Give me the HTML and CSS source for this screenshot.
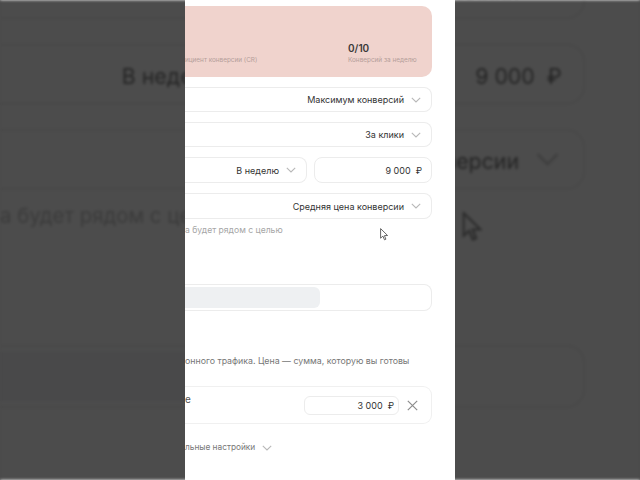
FILE: index.html
```html
<!DOCTYPE html>
<html>
<head>
    <title>Стратегия</title>
    <link rel="stylesheet" href="styles.css">
</head>
<body>
    <div class="stage">
        <div class="backdrop" id="backdrop"></div>

        <div class="panel" id="panel">
            <div class="stats">
                <div class="stat">
                    <div class="stat-value"></div>
                    <div class="stat-label">ициент конверсии (CR)</div>
                </div>
                <div class="stat">
                    <div class="stat-value">0/10</div>
                    <div class="stat-label">Конверсий за неделю</div>
                </div>
            </div>

            <div class="select">
                <span>Максимум конверсий</span>
                <svg class="chevron" width="10" height="6" viewBox="0 0 10 6"><path d="M0.8 0.8L5 5L9.2 0.8"/></svg>
            </div>
            <div class="select">
                <span>За клики</span>
                <svg class="chevron" width="10" height="6" viewBox="0 0 10 6"><path d="M0.8 0.8L5 5L9.2 0.8"/></svg>
            </div>
            <div class="select-pair">
                <div class="select">
                    <span>В неделю</span>
                    <svg class="chevron" width="10" height="6" viewBox="0 0 10 6"><path d="M0.8 0.8L5 5L9.2 0.8"/></svg>
                </div>
                <div class="select field">
                    <span>9 000&nbsp;&nbsp;₽</span>
                </div>
            </div>
            <div class="select">
                <span>Средняя цена конверсии</span>
                <svg class="chevron" width="10" height="6" viewBox="0 0 10 6"><path d="M0.8 0.8L5 5L9.2 0.8"/></svg>
            </div>
            <div class="hint">а будет рядом с целью</div>

            <div class="progress">
                <div class="progress-fill"></div>
            </div>

            <div class="desc">онного трафика. Цена — сумма, которую вы готовы</div>

            <div class="limit">
                <span class="limit-label">е</span>
                <div class="limit-input">3 000&nbsp;&nbsp;₽</div>
                <svg class="close" width="11" height="11" viewBox="0 0 11 11"><path d="M0.8 0.8L10.2 10.2M10.2 0.8L0.8 10.2"/></svg>
            </div>

            <div class="more">
                <span>льные настройки</span>
                <svg class="chevron" width="10" height="6" viewBox="0 0 10 6"><path d="M0.8 0.8L5 5L9.2 0.8"/></svg>
            </div>

            <svg class="pointer" width="9" height="13" viewBox="0 0 9 13"><path d="M0.6 0.6V10.2L2.9 8.1L4.5 11.8L5.9 11.2L4.4 7.6L7.6 7.5Z"/></svg>
        </div>
    </div>

    <script>
    // blurred copy of the panel behind it, like the video frame
    var copy = document.getElementById('panel').cloneNode(true);
    copy.removeAttribute('id');
    copy.setAttribute('aria-hidden', 'true');
    document.getElementById('backdrop').appendChild(copy);
    </script>
</body>
</html>
```

FILE: styles.css
```css
body {
    margin: 0;
    background-color: #4b4b4b;
    font-family: 'Inter', 'Noto Sans', sans-serif;
}
.stage {
    position: relative;
    width: 640px;
    height: 480px;
    overflow: hidden;
    display: flex;
    justify-content: center;
    background-color: #4b4b4b;
}
.backdrop {
    position: absolute;
    top: 0;
    left: 0;
    right: 0;
    bottom: 0;
    display: flex;
    justify-content: center;
    filter: blur(1.5px);
}
.backdrop .panel {
    z-index: 0;
    transform: scale(2.37);
    transform-origin: 50% 50%;
}
.backdrop::after {
    content: '';
    position: absolute;
    z-index: 2;
    top: 0;
    left: 0;
    right: 0;
    bottom: 0;
    background-color: rgba(31, 31, 31, 0.8);
}
.panel {
    position: relative;
    z-index: 1;
    width: 270px;
    height: 480px;
    flex-shrink: 0;
    overflow: hidden;
    background-color: #ffffff;
    padding: 6px 23px 0 0;
    box-sizing: border-box;
    color: #333333;
}
.stats {
    height: 71px;
    box-sizing: border-box;
    padding-bottom: 12px;
    background-color: #f0d3cd;
    border-radius: 0 10px 10px 0;
    display: grid;
    grid-template-columns: 163px 1fr;
    align-items: end;
}
.stat-value {
    font-size: 10px;
    line-height: 14px;
    height: 14px;
    font-weight: 600;
    color: #3a3a3a;
}
.stat-label {
    font-size: 6.4px;
    line-height: 10px;
    color: #b49e9a;
    white-space: nowrap;
}
.select {
    height: 25px;
    margin-top: 10px;
    box-sizing: border-box;
    border: 1px solid #ececec;
    border-left: none;
    border-radius: 0 8px 8px 0;
    display: flex;
    justify-content: flex-end;
    align-items: center;
    gap: 7px;
    padding-right: 10px;
    font-size: 9px;
    white-space: nowrap;
}
.chevron path {
    fill: none;
    stroke: #b8b8b8;
    stroke-width: 1.1;
}
.select-pair {
    display: flex;
    gap: 7px;
    margin-top: 10px;
}
.select-pair .select {
    margin-top: 0;
    height: 26px;
    flex: 1;
}
.select-pair .field {
    flex: 0 0 118px;
    border-left: 1px solid #ececec;
    border-radius: 8px;
    padding-right: 9px;
}
.select-pair + .select {
    height: 26px;
}
.hint {
    margin-top: 5px;
    font-size: 8.6px;
    line-height: 12px;
    color: #a6a6a6;
    white-space: nowrap;
}
.progress {
    margin-top: 48px;
    height: 27px;
    box-sizing: border-box;
    border: 1px solid #ececec;
    border-left: none;
    border-radius: 0 8px 8px 0;
    padding: 2px 0;
}
.progress-fill {
    width: 135px;
    height: 21px;
    background-color: #eef0f2;
    border-radius: 0 6px 6px 0;
}
.desc {
    margin-top: 43px;
    font-size: 8.8px;
    line-height: 13px;
    color: #777777;
    white-space: nowrap;
}
.limit {
    margin-top: 19px;
    height: 38px;
    box-sizing: border-box;
    border: 1px solid #f0f0f0;
    border-left: none;
    border-radius: 0 9px 9px 0;
    display: flex;
    align-items: center;
    padding-right: 13px;
    font-size: 10px;
}
.limit-label {
    flex: 1;
    align-self: flex-start;
    margin-top: 5px;
    line-height: 14px;
    color: #555555;
}
.limit-input {
    width: 95px;
    height: 19px;
    box-sizing: border-box;
    border: 1px solid #ececec;
    border-radius: 6px;
    text-align: right;
    padding-right: 4px;
    font-size: 9px;
    line-height: 17px;
    margin-right: 8px;
}
.close path {
    fill: none;
    stroke: #8c8c8c;
    stroke-width: 1.2;
}
.more {
    margin-top: 17px;
    display: flex;
    align-items: center;
    gap: 7px;
    font-size: 8.3px;
    line-height: 13px;
    color: #777777;
}
.pointer {
    position: absolute;
    left: 195px;
    top: 228px;
}
.pointer path {
    fill: #ffffff;
    stroke: #555555;
    stroke-width: 0.9;
}
```
